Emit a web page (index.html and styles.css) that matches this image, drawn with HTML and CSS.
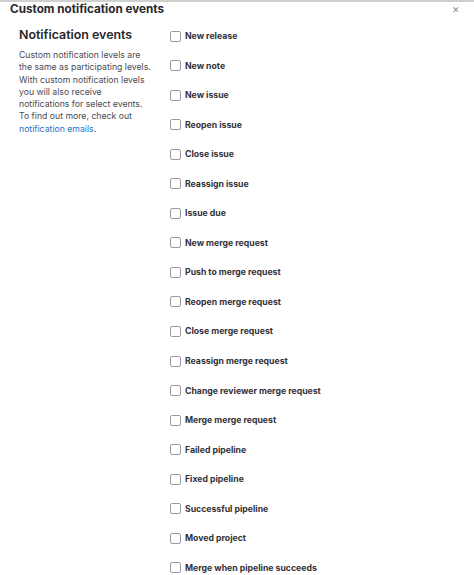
FILE: index.html
```html
<!DOCTYPE html>
<html>
<head>
<meta charset="utf-8">
<link rel="stylesheet" href="styles.css">
</head>
<body>
<div class="modal">
  <div class="modal-header">
    <h2 class="modal-title">Custom notification events</h2>
    <span class="close">&#x2715;</span>
  </div>
  <div class="modal-body">
    <div class="intro">
      <h3 class="intro-title">Notification events</h3>
      <p class="intro-text">Custom notification levels are the same as participating levels. With custom notification levels you will also receive notifications for select events. To find out more, check out <a class="link" href="#">notification emails</a>.</p>
    </div>
    <div class="events">
      <label class="event"><span class="box"></span>New release</label>
      <label class="event"><span class="box"></span>New note</label>
      <label class="event"><span class="box"></span>New issue</label>
      <label class="event"><span class="box"></span>Reopen issue</label>
      <label class="event"><span class="box"></span>Close issue</label>
      <label class="event"><span class="box"></span>Reassign issue</label>
      <label class="event"><span class="box"></span>Issue due</label>
      <label class="event"><span class="box"></span>New merge request</label>
      <label class="event"><span class="box"></span>Push to merge request</label>
      <label class="event"><span class="box"></span>Reopen merge request</label>
      <label class="event"><span class="box"></span>Close merge request</label>
      <label class="event"><span class="box"></span>Reassign merge request</label>
      <label class="event"><span class="box"></span>Change reviewer merge request</label>
      <label class="event"><span class="box"></span>Merge merge request</label>
      <label class="event"><span class="box"></span>Failed pipeline</label>
      <label class="event"><span class="box"></span>Fixed pipeline</label>
      <label class="event"><span class="box"></span>Successful pipeline</label>
      <label class="event"><span class="box"></span>Moved project</label>
      <label class="event"><span class="box"></span>Merge when pipeline succeeds</label>
    </div>
  </div>
</div>
</body>
</html>
```
FILE: styles.css
```css
html, body {
  margin: 0;
  padding: 0;
  background: #fff;
  font-family: Inter, "Noto Sans", sans-serif;
  color: #333238;
  overflow: hidden;
  height: 575px;
}
.modal {
  border-top: 2px solid #cfcfcf;
}
.modal-header {
  display: flex;
  align-items: center;
  justify-content: space-between;
  padding: 0 14px 0 10px;
  height: 15px;
}
.modal-title {
  margin: 0;
  font-size: 11.7px;
  font-weight: 700;
  line-height: 15px;
  color: #28272d;
}
.close {
  font-size: 9px;
  color: #8a8a8a;
  line-height: 10px;
}
.modal-body {
  display: flex;
  padding: 10px 0 0 19px;
}
.intro {
  width: 151px;
  flex: none;
}
.intro-title {
  margin: 0;
  font-size: 12.4px;
  font-weight: 600;
  line-height: 16px;
  color: #28272d;
}
.intro-text {
  margin: 6px 0 0;
  max-width: 133px;
  font-size: 8.7px;
  line-height: 12.3px;
  color: #4a4a52;
}
.link {
  color: #1f75cb;
  text-decoration: none;
}
.events {
  display: flex;
  flex-direction: column;
  gap: 13.55px;
  padding-top: 1px;
}
.event {
  display: flex;
  align-items: center;
  gap: 4px;
  height: 16px;
  font-size: 8.7px;
  font-weight: 700;
  color: #333238;
  white-space: nowrap;
}
.box {
  width: 9px;
  height: 9px;
  border: 1px solid #9a9aa0;
  border-radius: 2px;
  background: #fff;
  flex: none;
}
```
